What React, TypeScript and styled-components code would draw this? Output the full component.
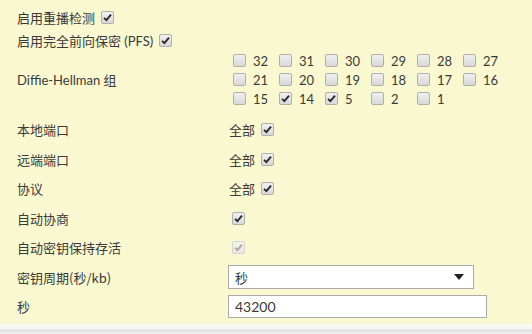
import styled, { createGlobalStyle } from "styled-components";

const GlobalStyle = createGlobalStyle`
html, body {
  margin: 0;
  padding: 0;
  background: #eeeeee;
}
body {
  font-family: Lato, "Noto Sans CJK SC", sans-serif;
  font-size: 13px;
  color: #3a3a3a;
}
`

const Panel = styled.div`
background: #f9f8d0;
padding: 5px 0 3px 17px;
height: 324px;
box-sizing: border-box;
`

const Footer = styled.div`
height: 10px;
background: linear-gradient(#fbfbf4 0, #f6f6f2 5px, #d8d8d8 6px, #e6e6e6 7px, #eeeeee 100%);
`

const InlineRow = styled.div<{ $h: number }>`
display: flex;
align-items: center;
gap: 6px;
height: ${(p) => p.$h}px;
`

const DhBlock = styled.div`
display: grid;
grid-template-columns: 211px 1fr;
align-items: center;
height: 57px;
`

const DhGrid = styled.div`
display: grid;
grid-template-columns: repeat(6, 46px);
grid-auto-rows: 19px;
margin-left: 5px;
`

const DhItem = styled.label`
display: flex;
align-items: center;
gap: 7px;
`

const FormRow = styled.div`
display: grid;
grid-template-columns: 211px 1fr;
align-items: center;
height: 29.5px;
`

const FirstRow = styled(FormRow)`
margin-top: 7px;
`

const Value = styled.div<{ $indent?: number }>`
display: flex;
align-items: center;
gap: 6px;
padding-left: ${(p) => p.$indent ?? 0}px;
`

const Box = styled.span<{ $disabled?: boolean }>`
display: inline-flex;
align-items: center;
justify-content: center;
width: 11px;
height: 11px;
border: 1px solid ${(p) => (p.$disabled ? "#d4d4cc" : "#b0b0ab")};
border-radius: 2px;
background: ${(p) =>
    p.$disabled
      ? "linear-gradient(#f4f4ef, #e8e8e2)"
      : "linear-gradient(#f0f0f0, #d8d8d8)"};
flex: none;
`

const Select = styled.div`
display: flex;
align-items: center;
justify-content: space-between;
width: 246px;
height: 24px;
box-sizing: border-box;
border: 1px solid #aaa;
background: #fff;
padding: 0 9px 0 6px;
font-family: "Noto Sans CJK SC", sans-serif;
`

const TextInput = styled.input`
width: 259px;
height: 23px;
box-sizing: border-box;
border: 1px solid #aaa;
background: #fff;
padding: 0 6px;
font: inherit;
font-size: 14px;
color: #3a3a3a;
`

const Cjk = styled.span`
font-family: "Noto Sans CJK SC", sans-serif;
`

function Check({ on, disabled }: { on?: boolean; disabled?: boolean }) {
  return (
    <Box $disabled={disabled}>
      {on && (
        <svg width="9" height="9" viewBox="0 0 9 9">
          <path
            d="M1 4.8 L3.4 7.2 L8 1.6"
            fill="none"
            stroke={disabled ? "#a8a8a0" : "#2a2a2a"}
            strokeWidth="1.9"
          />
        </svg>
      )}
    </Box>
  );
}

const groups = [
  ["32", false], ["31", false], ["30", false], ["29", false], ["28", false], ["27", false],
  ["21", false], ["20", false], ["19", false], ["18", false], ["17", false], ["16", false],
  ["15", false], ["14", true], ["5", true], ["2", false], ["1", false],
] as const;

export default function App() {
  return (
    <>
      <GlobalStyle />
      <Panel>
        <InlineRow $h={24}>
          <Cjk>启用重播检测</Cjk>
          <Check on />
        </InlineRow>
        <InlineRow $h={22}>
          <span><Cjk>启用完全前向保密</Cjk> (PFS)</span>
          <Check on />
        </InlineRow>
        <DhBlock>
          <span>Diffie-Hellman <Cjk>组</Cjk></span>
          <DhGrid>
            {groups.map(([n, on]) => (
              <DhItem key={n}>
                <Check on={on} />
                {n}
              </DhItem>
            ))}
          </DhGrid>
        </DhBlock>
        <FirstRow>
          <Cjk>本地端口</Cjk>
          <Value $indent={1}><Cjk>全部</Cjk><Check on /></Value>
        </FirstRow>
        <FormRow>
          <Cjk>远端端口</Cjk>
          <Value $indent={1}><Cjk>全部</Cjk><Check on /></Value>
        </FormRow>
        <FormRow>
          <Cjk>协议</Cjk>
          <Value $indent={1}><Cjk>全部</Cjk><Check on /></Value>
        </FormRow>
        <FormRow>
          <Cjk>自动协商</Cjk>
          <Value $indent={4}><Check on /></Value>
        </FormRow>
        <FormRow>
          <Cjk>自动密钥保持存活</Cjk>
          <Value $indent={4}><Check on disabled /></Value>
        </FormRow>
        <FormRow>
          <Cjk>密钥周期(秒/kb)</Cjk>
          <Select>
            <span>秒</span>
            <svg width="10" height="6" viewBox="0 0 10 6">
              <path d="M0 0 H10 L5 6 Z" fill="#222" />
            </svg>
          </Select>
        </FormRow>
        <FormRow>
          <Cjk>秒</Cjk>
          <TextInput defaultValue="43200" />
        </FormRow>
      </Panel>
      <Footer />
    </>
  );
}
